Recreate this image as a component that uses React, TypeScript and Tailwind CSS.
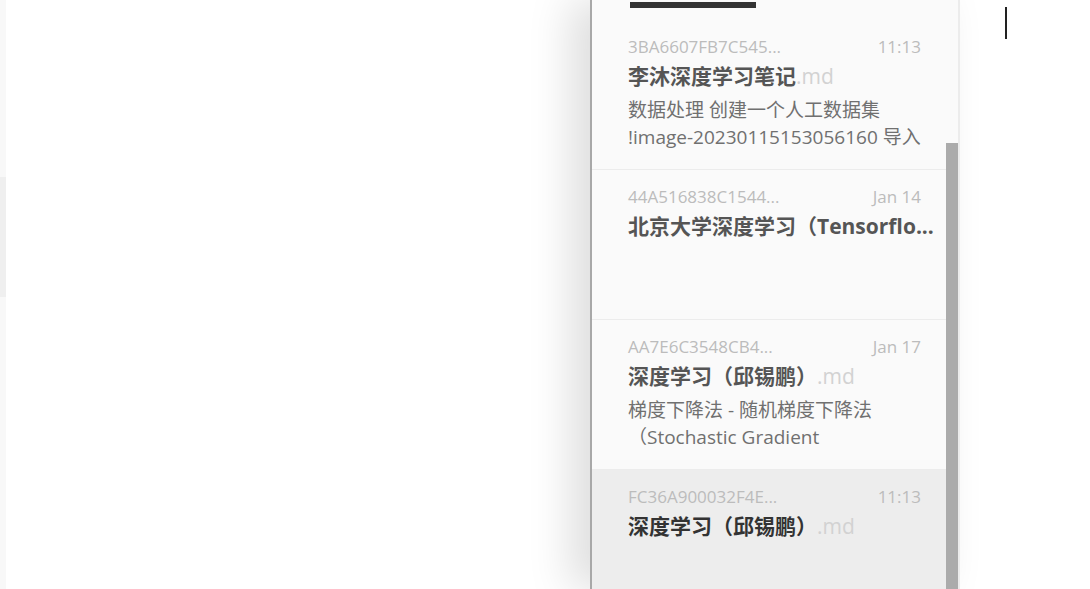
import React from "react";

type Note = {
  id: string;
  time: string;
  title: string;
  ext?: boolean;
  preview: string[];
  active?: boolean;
};

const notes: Note[] = [
  {
    id: "3BA6607FB7C545...",
    time: "11:13",
    title: "李沐深度学习笔记",
    ext: true,
    preview: ["数据处理 创建一个人工数据集", "!image-20230115153056160 导入"],
  },
  {
    id: "44A516838C1544...",
    time: "Jan 14",
    title: "北京大学深度学习（Tensorflo...",
    preview: [],
  },
  {
    id: "AA7E6C3548CB4...",
    time: "Jan 17",
    title: "深度学习（邱锡鹏）",
    ext: true,
    preview: ["梯度下降法 - 随机梯度下降法", "（Stochastic Gradient"],
  },
  {
    id: "FC36A900032F4E...",
    time: "11:13",
    title: "深度学习（邱锡鹏）",
    ext: true,
    preview: [],
    active: true,
  },
];

const font = {
  fontFamily: '"Open Sans", "Noto Sans CJK SC", sans-serif',
};

function NoteRow({ note }: { note: Note }) {
  return (
    <div
      className={`h-[150px] shrink-0 border-b border-[#ececec] pl-[36px] pr-[17px] pt-[15px] ${
        note.active ? "bg-[#ededed]" : ""
      }`}
    >
      <div className="flex justify-between text-[17px] leading-[24px] text-[#bcbcbc]">
        <span>{note.id}</span>
        <span className="mr-[8px]">{note.time}</span>
      </div>
      <div className="mt-[2px] whitespace-nowrap text-[21px] leading-[30px]">
        <span
          className={`font-bold ${note.active ? "text-[#333333]" : "text-[#555555]"}`}
        >
          {note.title}
        </span>
        {note.ext && <span className="text-[#d2d2d2]">.md</span>}
      </div>
      <div className="mt-[6px] text-[19px] leading-[27px] text-[#707070]">
        {note.preview.map((line) => (
          <div key={line} className="whitespace-nowrap">
            {line}
          </div>
        ))}
      </div>
    </div>
  );
}

export default function App() {
  return (
    <div className="flex h-[589px] w-[1090px] overflow-hidden bg-white" style={font}>
      {/* sidebar edge */}
      <div className="flex w-[6px] shrink-0 flex-col bg-[#f8f8f8]">
        <div className="h-[177px]" />
        <div className="h-[120px] bg-[#efefef]" />
      </div>

      {/* editor area */}
      <div className="w-[584px] shrink-0 bg-white" />

      {/* note list panel */}
      <div className="relative z-10 flex w-[370px] shrink-0 border-l-2 border-r-2 border-l-[#a8a8a8] border-r-[#ececec] bg-[#fafafa] shadow-[-20px_0_40px_rgba(0,0,0,0.13)]">
        <div className="flex w-[354px] flex-col">
          <div className="h-[20px] shrink-0 pl-[38px] pt-[2px]">
            <div className="h-[6px] w-[126px] bg-[#333333]" />
          </div>
          {notes.map((n) => (
            <NoteRow key={n.id} note={n} />
          ))}
        </div>
        <div className="flex w-[12px] flex-col">
          <div className="h-[143px]" />
          <div className="flex-1 bg-[#ababab]" />
        </div>
      </div>

      {/* right pane with caret */}
      <div className="flex-1 bg-white pl-[45px] pt-[7px]">
        <div className="h-[32px] w-[2px] bg-[#222222]" />
      </div>
    </div>
  );
}
